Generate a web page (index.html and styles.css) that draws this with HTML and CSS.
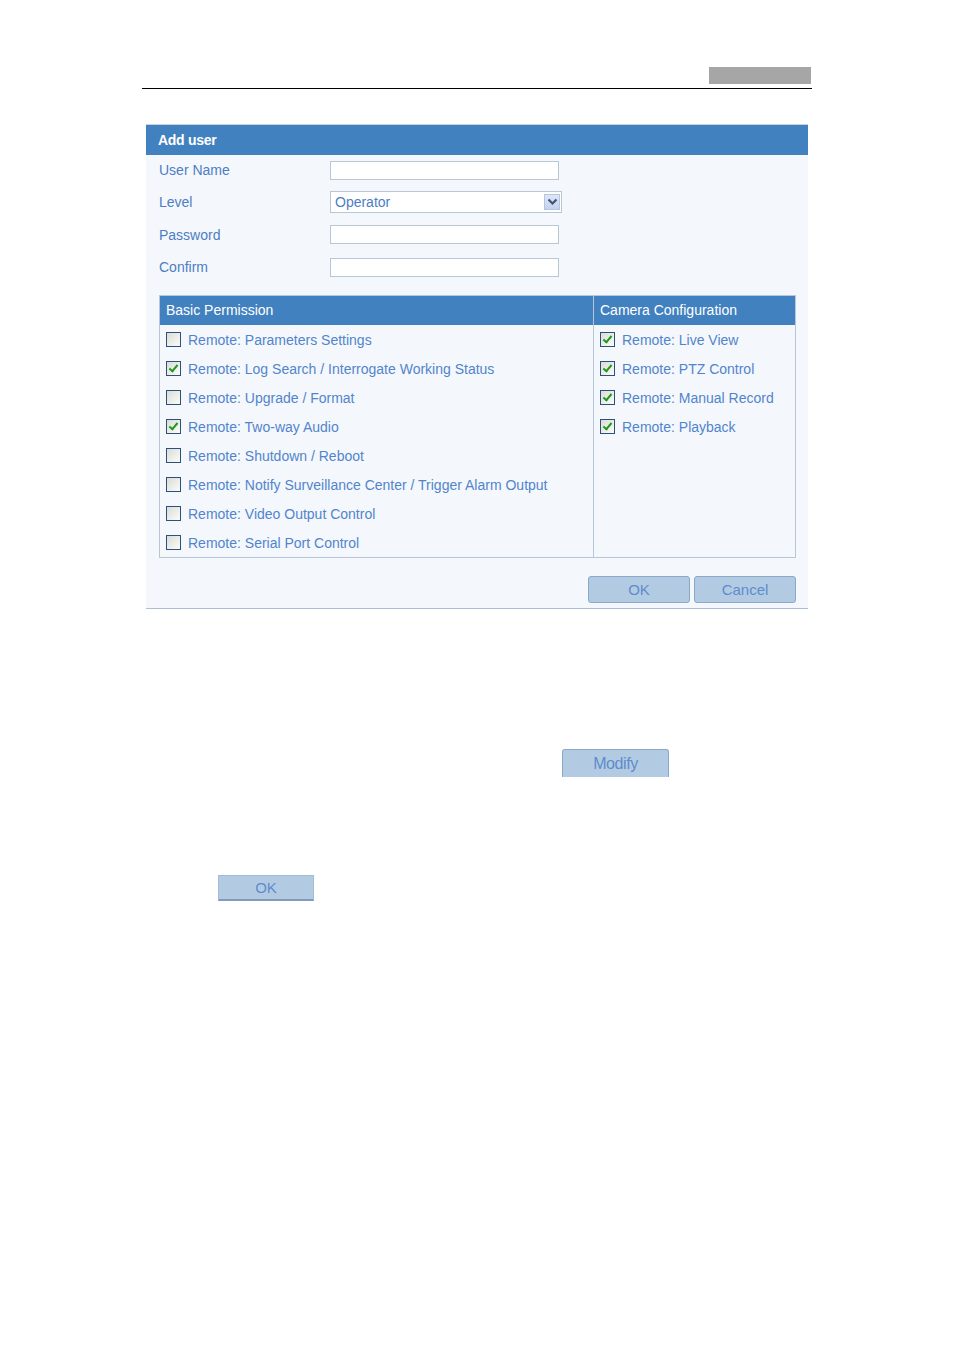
FILE: index.html
```html
<!DOCTYPE html>
<html>
<head>
<meta charset="utf-8">
<link rel="stylesheet" href="styles.css">
</head>
<body>
<div class="page">
  <header class="page-head">
    <div class="head-tab"></div>
  </header>

  <section class="dialog">
    <div class="dialog-title">Add user</div>
    <div class="dialog-body">
      <div class="form">
        <div class="form-row">
          <label class="form-label">User Name</label>
          <div class="field"></div>
        </div>
        <div class="form-row">
          <label class="form-label">Level</label>
          <div class="select">
            <span class="select-value">Operator</span>
            <span class="select-btn">
              <svg width="11" height="8" viewBox="0 0 11 8"><path d="M1.5 1.5 L5.5 5.5 L9.5 1.5" fill="none" stroke="#3f5570" stroke-width="2.2"/></svg>
            </span>
          </div>
        </div>
        <div class="form-row">
          <label class="form-label">Password</label>
          <div class="field"></div>
        </div>
        <div class="form-row">
          <label class="form-label">Confirm</label>
          <div class="field"></div>
        </div>
      </div>

      <div class="perm">
        <div class="perm-col perm-basic">
          <div class="perm-head">Basic Permission</div>
          <ul class="perm-list">
            <li><span class="cb"></span>Remote: Parameters Settings</li>
            <li><span class="cb checked"></span>Remote: Log Search / Interrogate Working Status</li>
            <li><span class="cb"></span>Remote: Upgrade / Format</li>
            <li><span class="cb checked"></span>Remote: Two-way Audio</li>
            <li><span class="cb"></span>Remote: Shutdown / Reboot</li>
            <li><span class="cb"></span>Remote: Notify Surveillance Center / Trigger Alarm Output</li>
            <li><span class="cb"></span>Remote: Video Output Control</li>
            <li><span class="cb"></span>Remote: Serial Port Control</li>
          </ul>
        </div>
        <div class="perm-col perm-camera">
          <div class="perm-head">Camera Configuration</div>
          <ul class="perm-list">
            <li><span class="cb checked"></span>Remote: Live View</li>
            <li><span class="cb checked"></span>Remote: PTZ Control</li>
            <li><span class="cb checked"></span>Remote: Manual Record</li>
            <li><span class="cb checked"></span>Remote: Playback</li>
          </ul>
        </div>
      </div>

      <div class="actions">
        <button class="btn btn-dialog">OK</button>
        <button class="btn btn-dialog">Cancel</button>
      </div>
    </div>
  </section>

  <div class="modify-row">
    <button class="btn btn-modify">Modify</button>
  </div>

  <div class="ok-row">
    <button class="btn btn-ok">OK</button>
  </div>
</div>
</body>
</html>
```

FILE: styles.css
```css
html, body {
  margin: 0;
  padding: 0;
  background: #ffffff;
}

body {
  font-family: "Liberation Sans", Arial, sans-serif;
  width: 955px;
  height: 1350px;
}

.page {
  padding-top: 67px;
}

.page-head {
  margin-left: 142px;
  width: 670px;
  border-bottom: 1px solid #000;
  height: 21px;
  display: flex;
  justify-content: flex-end;
}

.head-tab {
  width: 102px;
  height: 17px;
  background: #a6a6a6;
  margin-right: 1px;
}

.dialog {
  margin-left: 146px;
  margin-top: 35px;
  width: 662px;
  background: #f4f8fd;
  border-bottom: 1px solid #a9bfd8;
  border-top: 1px solid #c9d3de;
}

.dialog-title {
  height: 30px;
  background: #4181c0;
  color: #ffffff;
  font-weight: bold;
  font-size: 14px;
  line-height: 30px;
  padding-left: 12px;
  letter-spacing: -0.3px;
}

.dialog-body {
  padding: 0 12px 4px 13px;
}

.form {
  display: flex;
  flex-direction: column;
  margin-top: -1px;
}

.form-row {
  display: flex;
  align-items: center;
  height: 32.3px;
}

.form-label {
  width: 171px;
  font-size: 14px;
  color: #4d7dc4;
}

.field {
  width: 227px;
  height: 17px;
  background: #fff;
  border: 1px solid #b8c7d8;
}

.select {
  width: 230px;
  height: 20px;
  background: #fff;
  border: 1px solid #b8c7d8;
  display: flex;
  align-items: center;
  justify-content: space-between;
}

.select-value {
  font-size: 14px;
  color: #4d7dc4;
  padding-left: 4px;
}

.select-btn {
  width: 16px;
  height: 16px;
  margin-right: 1px;
  background: linear-gradient(#dde6f6, #c4d2ee);
  border: 1px solid #b4c4e4;
  box-sizing: border-box;
  display: flex;
  align-items: center;
  justify-content: center;
}

.perm {
  margin-top: 12px;
  display: flex;
  width: 635px;
  height: 261px;
  border: 1px solid #b7c7d9;
}

.perm-col {
  display: flex;
  flex-direction: column;
}

.perm-basic {
  width: 433px;
  border-right: 1px solid #b7c7d9;
}

.perm-camera {
  flex: 1;
}

.perm-head {
  height: 29px;
  line-height: 29px;
  background: #4181c0;
  color: #fff;
  font-size: 14px;
  padding-left: 6px;
}

.perm-list {
  list-style: none;
  margin: 0;
  padding: 0;
}

.perm-list li {
  height: 29px;
  display: flex;
  align-items: center;
  font-size: 14px;
  color: #5284cc;
  padding-left: 6px;
}

.cb {
  width: 13px;
  height: 13px;
  border: 1px solid #2c4f7c;
  background: linear-gradient(135deg, #dcdcd6, #fbfbf8);
  margin-right: 7px;
  position: relative;
  flex: none;
}

.cb.checked::after {
  content: "";
  position: absolute;
  left: 4px;
  top: 1px;
  width: 3px;
  height: 7px;
  border-right: 2px solid #1d9a1d;
  border-bottom: 2px solid #1d9a1d;
  transform: rotate(40deg);
}

.actions {
  display: flex;
  justify-content: flex-end;
  gap: 4px;
  margin-top: 18px;
  height: 28px;
}

.btn {
  font-family: "Liberation Sans", Arial, sans-serif;
  background: #b3cbe2;
  color: #5e8ccc;
  font-size: 15px;
  border: 1px solid #8aa9c9;
  border-radius: 3px;
  padding: 0;
  cursor: pointer;
}

.btn-dialog {
  width: 102px;
  height: 27px;
}

.modify-row {
  margin-top: 140px;
  padding-left: 562px;
}

.btn-modify {
  width: 107px;
  height: 28px;
  font-size: 16px;
  border-bottom: none;
  border-radius: 3px 3px 0 0;
  letter-spacing: -0.4px;
}

.ok-row {
  margin-top: 98px;
  padding-left: 218px;
}

.btn-ok {
  width: 96px;
  height: 26px;
  border-radius: 0;
  border-color: #a3bcd6;
  border-bottom: 2px solid #7f9cba;
}
```
